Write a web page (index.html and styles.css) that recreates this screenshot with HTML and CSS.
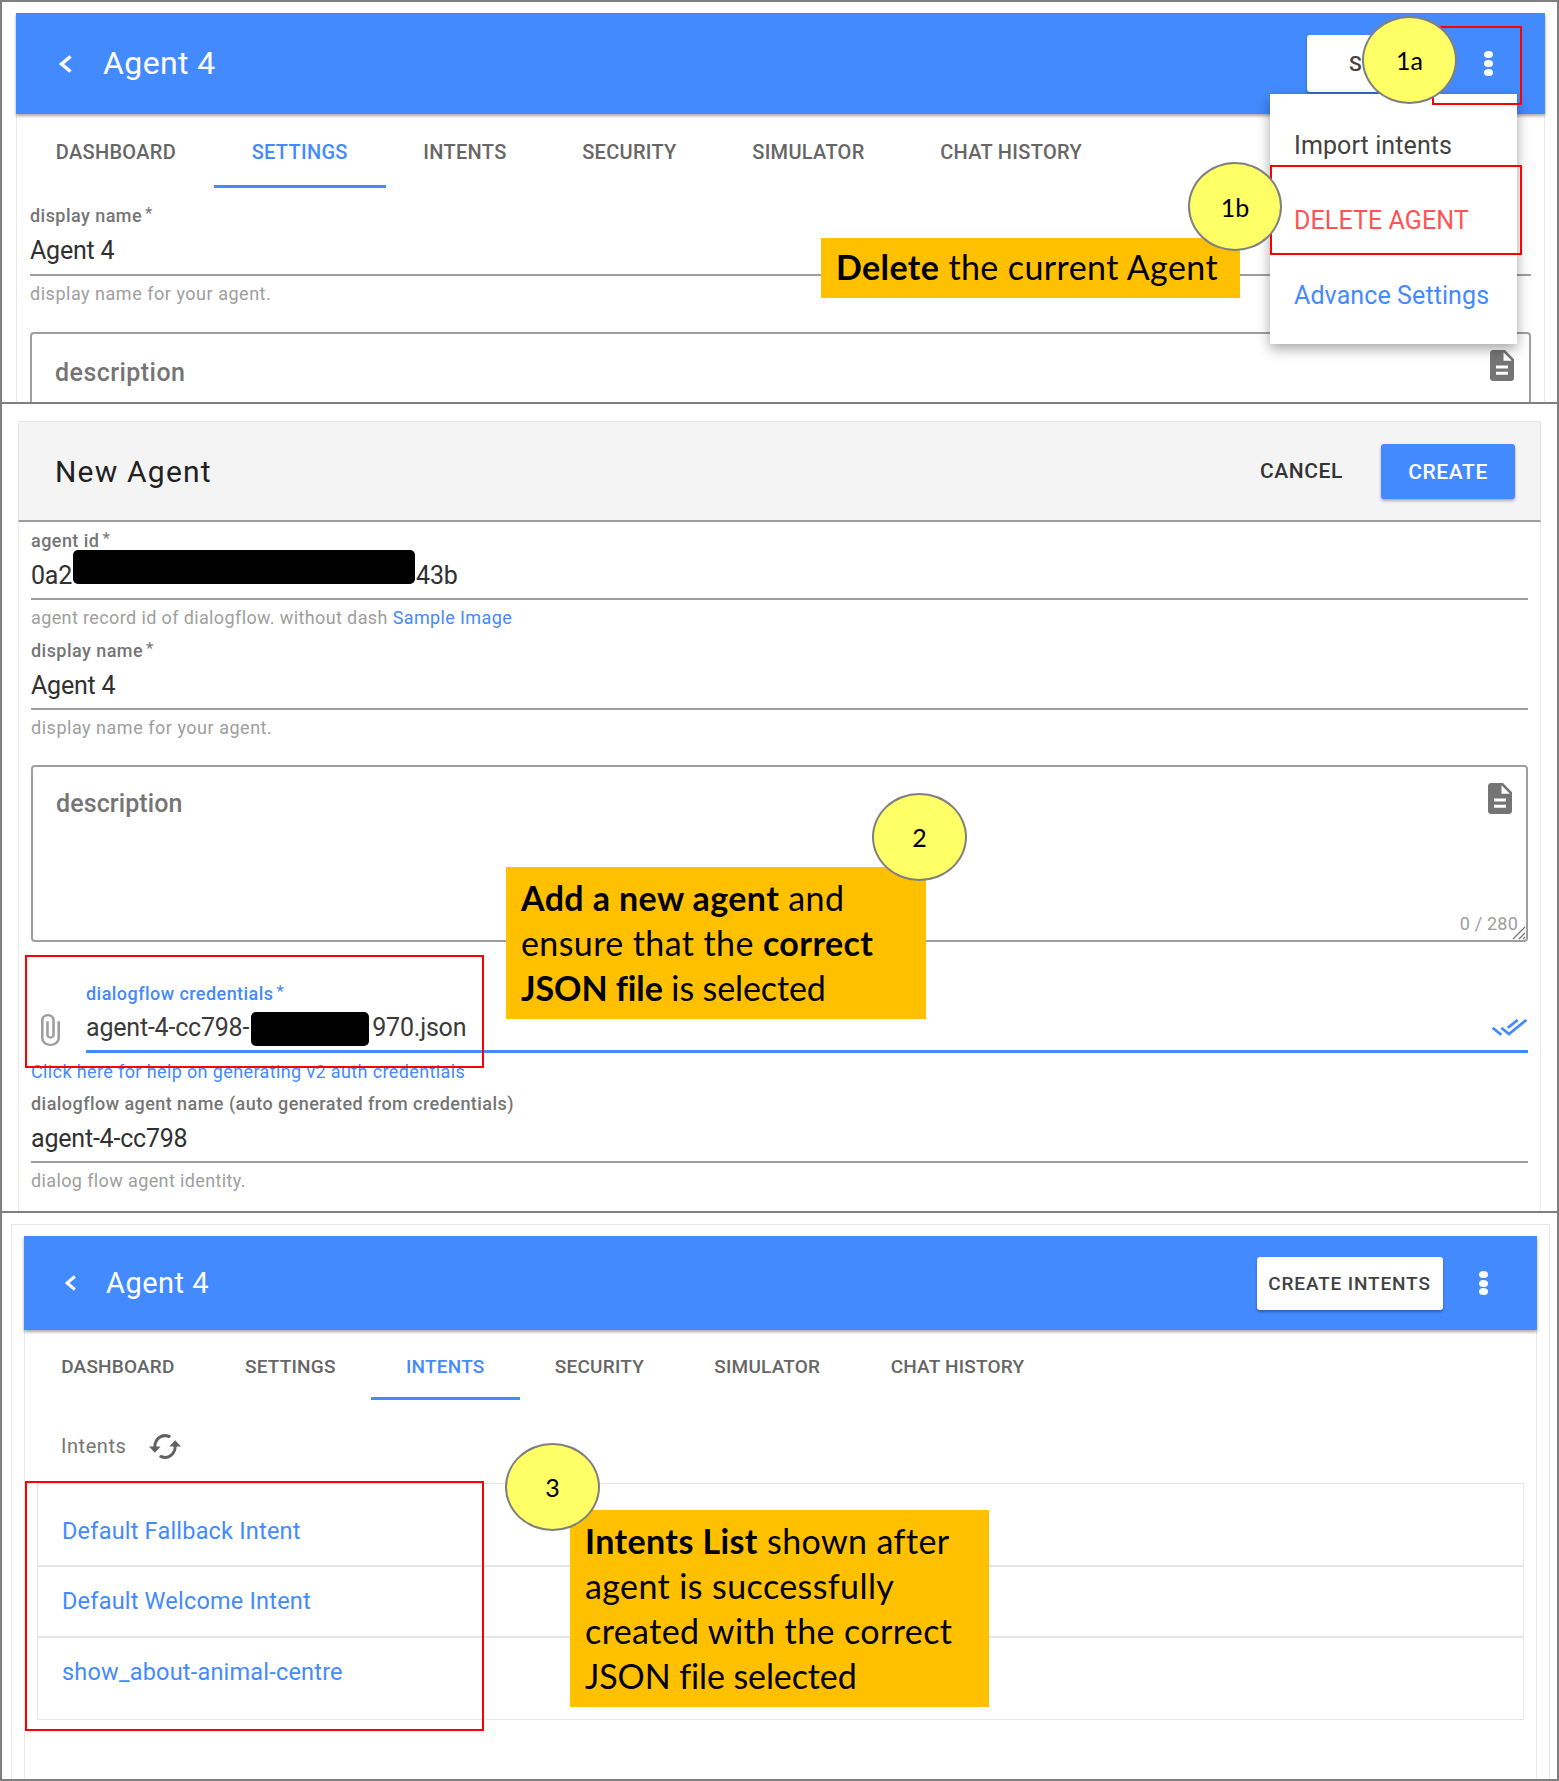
FILE: index.html
```html
<!DOCTYPE html>
<html lang="en">
<head>
<meta charset="utf-8">
<title>Agent setup walkthrough</title>
<link rel="stylesheet" href="styles.css">
</head>
<body>
<main class="frame">

  <section class="panel panel-one">
    <header class="appbar appbar-one">
      <svg class="chevron" viewBox="0 0 15 20"><polyline points="12.5,2.5 3.5,10 12.5,17.5"/></svg>
      <h1 class="appbar-title">Agent 4</h1>
      <button class="appbar-btn save-btn">S</button>
      <div class="dots"><span></span><span></span><span></span></div>
    </header>
    <div class="card-body card-one">
      <nav class="tabs tabs-one">
        <a class="tab">DASHBOARD</a>
        <a class="tab active">SETTINGS</a>
        <a class="tab">INTENTS</a>
        <a class="tab">SECURITY</a>
        <a class="tab">SIMULATOR</a>
        <a class="tab">CHAT HISTORY</a>
      </nav>
      <div class="form form-one">
        <div class="label">display name<sup class="star">*</sup></div>
        <div class="value"><span>Agent 4</span></div>
        <div class="hint hint-wide">display name for your agent.</div>
        <div class="textarea textarea-one">
          <span class="textarea-label">description</span>
          <svg class="doc-icon" viewBox="4 2 16 20" preserveAspectRatio="none"><path d="M14 2H6c-1.1 0-2 .9-2 2v16c0 1.1.9 2 2 2h12c1.1 0 2-.9 2-2V8l-6-6zm2 16H8v-2h8v2zm0-4H8v-2h8v2zm-3-5V3.5L18.5 9H13z"/></svg>
        </div>
      </div>
    </div>

    <div class="menu">
      <div class="menu-item">Import intents</div>
      <div class="menu-item danger">DELETE AGENT</div>
      <div class="menu-item link">Advance Settings</div>
    </div>
    <div class="redbox box-1a"></div>
    <div class="redbox box-1b"></div>
    <div class="note note-1"><b>Delete</b> the current Agent</div>
    <div class="bubble bubble-1a">1a</div>
    <div class="bubble bubble-1b">1b</div>
  </section>

  <section class="panel panel-two">
    <header class="dialog-head">
      <h2 class="dialog-title">New Agent</h2>
      <button class="cancel-btn">CANCEL</button>
      <button class="create-btn">CREATE</button>
    </header>
    <div class="card-body form form-two">
      <div class="label">agent id<sup class="star">*</sup></div>
      <div class="value"><span>0a2</span><i class="redact redact-id"></i><span>43b</span></div>
      <div class="hint">agent record id of dialogflow. without dash <a class="blue">Sample Image</a></div>

      <div class="label spaced">display name<sup class="star">*</sup></div>
      <div class="value"><span>Agent 4</span></div>
      <div class="hint hint-wide">display name for your agent.</div>

      <div class="textarea textarea-two">
        <span class="textarea-label">description</span>
        <svg class="doc-icon" viewBox="4 2 16 20" preserveAspectRatio="none"><path d="M14 2H6c-1.1 0-2 .9-2 2v16c0 1.1.9 2 2 2h12c1.1 0 2-.9 2-2V8l-6-6zm2 16H8v-2h8v2zm0-4H8v-2h8v2zm-3-5V3.5L18.5 9H13z"/></svg>
        <span class="counter">0 / 280</span>
        <svg class="resize" viewBox="0 0 14 14"><path d="M1 13 13 1M7 13l6-6M11 13l2-2"/></svg>
      </div>

      <div class="file-field">
        <svg class="clip" viewBox="7 1 11 22" preserveAspectRatio="none"><path d="M16.5 6v11.5c0 2.21-1.79 4-4 4s-4-1.79-4-4V5c0-1.38 1.12-2.5 2.5-2.5s2.5 1.12 2.5 2.5v10.5c0 .55-.45 1-1 1s-1-.45-1-1V6H10v9.5c0 1.38 1.12 2.5 2.5 2.5s2.5-1.12 2.5-2.5V5c0-2.21-1.79-4-4-4S7 2.79 7 5v12.5c0 3.04 2.46 5.5 5.5 5.5s5.5-2.46 5.5-5.5V6h-1.5z"/></svg>
        <div class="file-col">
          <div class="label focus">dialogflow credentials<sup class="star">*</sup></div>
          <div class="value focus-line">
            <span>agent-4-cc798-</span><i class="redact redact-key"></i><span>970.json</span>
            <svg class="done-all" viewBox="0 4 24 16" preserveAspectRatio="none"><path d="M18 7l-1.41-1.41-6.34 6.34 1.41 1.41L18 7zm4.24-1.41L11.66 16.17 7.48 12l-1.41 1.41L11.66 19l12-12-1.42-1.41zM.41 13.41L6 19l1.41-1.41L1.83 12 .41 13.41z"/></svg>
          </div>
        </div>
      </div>
      <div class="hint hint-link"><a class="blue">Click here for help on generating v2 auth credentials</a></div>

      <div class="label spaced after-link">dialogflow agent name (auto generated from credentials)</div>
      <div class="value"><span>agent-4-cc798</span></div>
      <div class="hint">dialog flow agent identity.</div>
    </div>

    <div class="redbox box-2"></div>
    <div class="note note-2"><b>Add a new agent</b> and<br>ensure that the <b>correct</b><br><span class="tight"><b>JSON file</b> is selected</span></div>
    <div class="bubble bubble-2">2</div>
  </section>

  <section class="panel panel-three">
    <div class="outer-card">
      <header class="appbar appbar-three">
        <svg class="chevron chevron-small" viewBox="0 0 15 20"><polyline points="12.5,2.5 3.5,10 12.5,17.5"/></svg>
        <h1 class="appbar-title title-small">Agent 4</h1>
        <button class="appbar-btn intents-btn">CREATE INTENTS</button>
        <div class="dots dots-small"><span></span><span></span><span></span></div>
      </header>
      <div class="card-body card-three">
        <nav class="tabs tabs-three">
          <a class="tab">DASHBOARD</a>
          <a class="tab">SETTINGS</a>
          <a class="tab active">INTENTS</a>
          <a class="tab">SECURITY</a>
          <a class="tab">SIMULATOR</a>
          <a class="tab">CHAT HISTORY</a>
        </nav>
        <div class="list-title">
          <span>Intents</span>
          <svg class="sync" viewBox="1 4 22 16" preserveAspectRatio="none"><path d="M19 8l-4 4h3c0 3.31-2.69 6-6 6-1.01 0-1.97-.25-2.8-.7l-1.46 1.46C8.97 19.54 10.43 20 12 20c4.42 0 8-3.58 8-8h3l-4-4zM6 12c0-3.31 2.69-6 6-6 1.01 0 1.97.25 2.8.7l1.46-1.46C15.03 4.46 13.57 4 12 4c-4.42 0-8 3.58-8 8H1l4 4 4-4H6z"/></svg>
        </div>
        <ul class="intent-list">
          <li>Default Fallback Intent</li>
          <li>Default Welcome Intent</li>
          <li>show_about-animal-centre</li>
        </ul>
      </div>
    </div>

    <div class="redbox box-3"></div>
    <div class="note note-3"><b>Intents List</b> shown after<br>agent is successfully<br>created with the correct<br><span class="tight">JSON file selected</span></div>
    <div class="bubble bubble-3">3</div>
  </section>

</main>
</body>
</html>
```
FILE: styles.css
```css
* { box-sizing: border-box; }

html, body { margin: 0; padding: 0; background: #fff; }

body {
  width: 1559px;
  height: 1781px;
  font-family: Roboto, "Liberation Sans", sans-serif;
  color: #212121;
  overflow: hidden;
}

.frame {
  width: 1559px;
  height: 1781px;
  border: 2px solid #7f7f7f;
  background: #fff;
  display: flex;
  flex-direction: column;
}

.panel {
  position: relative;
  overflow: hidden;
  flex: none;
  background: #fff;
}

.panel-one { height: 402px; padding: 11px 12px 0 14px; border-bottom: 2px solid #7f7f7f; }
.panel-two { height: 809px; padding: 17px 16px 0 16px; border-bottom: 2px solid #7f7f7f; }
.panel-three { height: 566px; padding: 11px 7px 0 9px; }

/* App bars */
.appbar {
  display: flex;
  align-items: center;
  background: #448aff;
  box-shadow: 0 2px 3px rgba(0, 0, 0, .35);
  position: relative;
}

.appbar-one { height: 101px; padding: 0 45px 0 42px; }
.appbar-three { height: 94px; padding: 0 41px 0 40px; }

.chevron { width: 15px; height: 20px; flex: none; }
.chevron polyline { fill: none; stroke: #fff; stroke-width: 3.4; }
.chevron-small { width: 13px; height: 18px; }

.appbar-title {
  margin: 0 auto 2px 30px;
  font-size: 32px;
  font-weight: 400;
  letter-spacing: .4px;
  color: #fff;
}

.title-small { margin: 0 auto 0 29px; font-size: 29px; letter-spacing: .5px; }

.appbar-btn {
  border: 0;
  background: #fff;
  border-radius: 3px;
  font-family: inherit;
  font-weight: 500;
  color: #424242;
  box-shadow: 0 2px 3px rgba(0, 0, 0, .3);
  padding: 0;
  flex: none;
}

.save-btn { width: 132px; height: 57px; margin-right: 37px; padding-left: 42px; font-size: 21px; text-align: left; }
.intents-btn { width: 186px; height: 53px; margin-right: 29px; font-size: 19px; letter-spacing: .85px; }

.dots { width: 24px; display: flex; flex-direction: column; align-items: center; gap: 2px; flex: none; }
.dots span { width: 9px; height: 7px; border-radius: 50%; background: #fff; }
.dots-small { gap: 1.5px; }
.dots-small span { height: 7px; }

/* Tabs */
.card-body {
  border-left: 1px solid #e8e8e8;
  border-right: 1px solid #e8e8e8;
}

.tabs { display: flex; }

.tab {
  display: block;
  color: #666;
  font-weight: 500;
  text-align: center;
  border-bottom: 3px solid transparent;
  white-space: nowrap;
}

.tab.active { color: #448aff; border-bottom-color: #448aff; }

.tabs-one .tab { height: 74px; padding: 24px 37.8px 0; font-size: 20px; line-height: 28px; letter-spacing: .3px; }
.tabs-one .tab:first-child { margin-left: 1px; }

.tabs-three { padding-left: 1px; }
.tabs-three .tab { height: 70px; padding: 23px 35.2px 0; font-size: 19px; line-height: 28px; letter-spacing: .2px; }

/* Form fields */
.form-one { padding: 19px 13px 0 13px; }
.form-two { padding: 10px 12px 0 12px; height: 689px; }

.label {
  height: 20px;
  line-height: 18px;
  font-size: 18px;
  font-weight: 500;
  color: #757575;
  letter-spacing: .45px;
  white-space: nowrap;
}

.label.spaced { margin-top: 14px; }
.label.after-link { margin-top: 13px; }
.label.focus { color: #448aff; line-height: 20px; }

.star {
  font-size: 17px;
  font-weight: 400;
  line-height: 0;
  margin-left: 3px;
  vertical-align: 3px;
}

.value {
  display: flex;
  align-items: center;
  height: 48px;
  font-size: 25px;
  letter-spacing: -.2px;
  color: #303030;
  border-bottom: 2px solid #9e9e9e;
  white-space: nowrap;
}

.form-one .value { height: 49px; }

.focus-line { height: 49px; border-bottom: 3px solid #448aff; color: #3a3a3a; }

.hint {
  height: 20px;
  line-height: 20px;
  margin-top: 8px;
  font-size: 18px;
  letter-spacing: .38px;
  color: #9e9e9e;
  white-space: nowrap;
}

.hint-wide { letter-spacing: .52px; }
.hint-link { margin-top: 9px; }

.blue { color: #448aff; }

.textarea {
  position: relative;
  border: 2px solid #9e9e9e;
  border-radius: 4px;
  padding: 24px 0 0 23px;
}

.textarea-one { margin-top: 28px; height: 180px; }
.textarea-two { margin-top: 27px; height: 177px; padding-top: 22px; }

.textarea-label {
  font-size: 25px;
  font-weight: 500;
  color: #757575;
  line-height: 30px;
  letter-spacing: .45px;
}

.textarea-two .textarea-label { letter-spacing: .1px; }

.doc-icon { position: absolute; right: 15px; top: 16px; width: 24px; height: 31px; fill: #757575; }
.textarea-two .doc-icon { right: 14px; }

.counter {
  position: absolute;
  right: 8px;
  bottom: 6px;
  font-size: 18px;
  letter-spacing: .2px;
  color: #9e9e9e;
}

.resize { position: absolute; right: 0; bottom: 0; width: 14px; height: 14px; fill: none; stroke: #757575; stroke-width: 1.2; }

.redact { display: block; background: #000; flex: none; border-radius: 5px; }
.redact-id { width: 342px; height: 34px; margin: 0 1px 16px 1px; }
.redact-key { width: 118px; height: 34px; margin: 4px 3px 0 2px; }

.file-field { display: flex; align-items: flex-end; margin-top: 42px; }
.clip { width: 19px; height: 32px; fill: #9e9e9e; margin: 0 26px 7px 10px; flex: none; }
.file-col { flex: 1; }
.done-all { width: 37px; height: 20px; fill: #448aff; margin-left: auto; }

/* Dialog head */
.dialog-head {
  display: flex;
  align-items: center;
  height: 101px;
  background: #f4f4f4;
  border: 1px solid #e6e6e6;
  border-bottom: 2px solid #9e9e9e;
  padding: 0 25px 0 36px;
}

.dialog-title {
  margin: 0 auto 0 0;
  font-size: 30px;
  font-weight: 400;
  letter-spacing: 1.2px;
  color: #212121;
}

.cancel-btn, .create-btn {
  border: 0;
  padding: 0;
  font-family: inherit;
  font-size: 21px;
  font-weight: 500;
  letter-spacing: .6px;
}

.cancel-btn { background: none; color: #333; margin-right: 38px; }

.create-btn {
  width: 134px;
  height: 55px;
  margin-top: 1px;
  background: #448aff;
  color: #fff;
  border-radius: 3px;
  box-shadow: 0 2px 3px rgba(0, 0, 0, .3);
}

/* Intents */
.outer-card {
  height: 555px;
  border: 1.5px solid #e6e6e6;
  border-bottom: 0;
  padding: 11px 12.5px 0 12px;
}

.card-three { height: 448px; padding: 0 12px 0 0; }

.list-title {
  display: flex;
  align-items: center;
  height: 40px;
  margin: 26px 0 17px 36px;
  gap: 23px;
  font-size: 20px;
  letter-spacing: .55px;
  color: #757575;
}

.sync { width: 32px; height: 25px; fill: #616161; }

.intent-list {
  list-style: none;
  margin: 0 0 0 12px;
  padding: 11px 0 12px;
  border: 1.5px solid #e6e6e6;
  font-size: 23.5px;
  color: #448aff;
  letter-spacing: .2px;
}

.intent-list li {
  height: 71px;
  line-height: 68px;
  padding-left: 24px;
}

.intent-list li:first-child { height: 70px; line-height: 72px; }

.intent-list li + li { border-top: 2px solid #e6e6e6; }

/* Overflow menu */
.menu {
  position: absolute;
  left: 1268px;
  top: 92px;
  width: 247px;
  height: 250px;
  padding-top: 14px;
  background: #fff;
  box-shadow: 0 5px 12px rgba(0, 0, 0, .35);
}

.menu-item {
  height: 75px;
  line-height: 75px;
  padding-left: 24px;
  font-size: 25px;
  letter-spacing: .1px;
  color: #424242;
  white-space: nowrap;
}

.menu-item.danger { color: #ff5252; }
.menu-item.link { color: #448aff; }

/* Annotations */
.redbox { position: absolute; border: 2px solid #f00; }
.box-1a { left: 1430px; top: 24px; width: 90px; height: 79px; }
.box-1b { left: 1268px; top: 163px; width: 252px; height: 90px; }
.box-2 { left: 23px; top: 551px; width: 459px; height: 113px; }
.box-3 { left: 23px; top: 268px; width: 459px; height: 250px; }

.note {
  position: absolute;
  background: #ffc000;
  color: #000;
  font-family: Lato, "Noto Sans", sans-serif;
  font-size: 34px;
  letter-spacing: .4px;
  white-space: nowrap;
}

.tight { letter-spacing: -.1px; }

.note-1 { left: 819px; top: 236px; width: 419px; height: 60px; padding-left: 15px; line-height: 58px; }
.note-2 { left: 504px; top: 463px; width: 420px; height: 152px; padding: 8px 0 0 15px; line-height: 45px; }
.note-3 { left: 568px; top: 297px; width: 419px; height: 197px; padding: 8px 0 0 15px; line-height: 45px; }

.bubble {
  position: absolute;
  display: flex;
  align-items: center;
  justify-content: center;
  background: #ffff66;
  border: 2px solid #7f7f7f;
  border-radius: 50%;
  font-family: Lato, "Noto Sans", sans-serif;
  font-size: 25px;
  color: #000;
}

.bubble-1a { left: 1360px; top: 14px; width: 95px; height: 88px; }
.bubble-1b { left: 1186px; top: 160px; width: 94px; height: 89px; }
.bubble-2 { left: 870px; top: 389px; width: 95px; height: 88px; }
.bubble-3 { left: 503px; top: 230px; width: 95px; height: 88px; }
```
